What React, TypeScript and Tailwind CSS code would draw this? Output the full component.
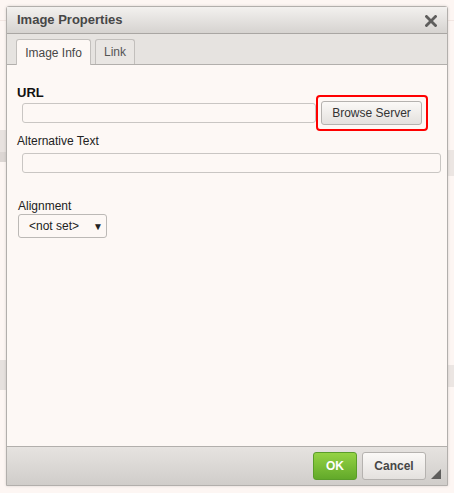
import React from "react";

export default function App() {
  return (
    <div
      className="relative w-[454px] h-[493px] bg-[#fdf6f3] overflow-hidden"
      style={{ fontFamily: '"Liberation Sans", Arial, sans-serif' }}
    >
      {/* faint background page */}
      <div className="absolute left-0 top-[20px] w-[454px] h-px bg-[#f2e6e2]" />
      <div className="absolute left-0 top-[130px] w-[6px] h-[22px] bg-[#e8e2df]" />
      <div className="absolute left-0 top-[152px] w-[6px] h-[10px] bg-[#dcd6d3]" />
      <div className="absolute left-0 top-[360px] w-[6px] h-[30px] bg-[#e6e1de]" />
      <div className="absolute left-[447px] top-[150px] w-[7px] h-[26px] bg-[#ece6e3]" />
      <div className="absolute left-[447px] top-[365px] w-[7px] h-[22px] bg-[#ece6e3]" />

      {/* dialog */}
      <div className="absolute left-[6px] top-[6px] w-[442px] h-[480px] border border-[#b2afac] rounded-t-[3px] flex flex-col bg-[#fdf8f5] shadow-[0_0_3px_rgba(0,0,0,0.15)]">
        {/* title bar */}
        <div className="h-[27px] flex items-center justify-between px-[10px] bg-gradient-to-b from-[#f3f1ef] to-[#d6d3d0] border-b border-[#a9a6a3]">
          <span className="text-[13px] font-bold text-[#474747]">Image Properties</span>
          <svg width="12" height="12" viewBox="0 0 12 12" className="mt-[2px]">
            <path d="M1.5 1.5 L10.5 10.5 M10.5 1.5 L1.5 10.5" stroke="#5f5e5d" strokeWidth="2.8" strokeLinecap="square" />
          </svg>
        </div>
        {/* tabs */}
        <div className="h-[31px] bg-[#e6e3e0] border-b border-[#b2afac] flex items-end px-[9px] gap-[4px]">
          <div className="w-[75px] border border-b-0 border-[#c2bfbc] rounded-t-[3px] bg-[#fdf8f5] flex items-center justify-center text-[12px] text-[#474747] -mb-px h-[26px]">
            Image Info
          </div>
          <div className="h-[25px] w-[40px] border border-b-0 border-[#c2bfbc] rounded-t-[3px] bg-[#e9e6e3] flex items-center justify-center text-[12px] text-[#555]">
            Link
          </div>
        </div>
        {/* body */}
        <div className="flex-1 relative px-[10px]">
          <div className="pt-[20px] text-[13px] font-bold text-[#111] leading-[15px]">URL</div>
          <div className="flex items-center mt-[1px]">
            <div className="ml-[5px] w-[294px] h-[20px] border border-[#c9c6c3] rounded-[3px] bg-[#fdf8f5]" />
            <div className="relative ml-[5px]">
              <div className="absolute -left-[5px] -top-[6px] w-[112px] h-[36px] border-2 border-[#ff0000] rounded-[4px]" />
              <div className="w-[101px] h-[24px] border border-[#b5b2af] rounded-[3px] bg-gradient-to-b from-[#fbf9f7] to-[#e4e1de] flex items-center justify-center text-[12px] text-[#333]">
                Browse Server
              </div>
            </div>
          </div>
          <div className="mt-[9px] text-[12px] text-[#222] leading-[14px]">Alternative Text</div>
          <div className="ml-[5px] mt-[5px] w-[419px] h-[20px] border border-[#c9c6c3] rounded-[3px] bg-[#fdf8f5]" />
          <div className="mt-[26px] ml-[1px] text-[12px] text-[#222] leading-[14px]">Alignment</div>
          <div className="mt-[1px] ml-[1px] w-[89px] h-[24px] border border-[#bcb9b6] rounded-[3px] bg-[#fdf8f5] flex items-center justify-between pl-[10px] pr-[3px] text-[12px] text-[#222]">
            <span>&lt;not set&gt;</span>
            <span className="text-[10px]">▼</span>
          </div>
        </div>
        {/* footer */}
        <div className="h-[39px] bg-gradient-to-b from-[#e6e3e0] to-[#d0cdca] border-t border-[#b2afac] flex items-center justify-end relative">
          <div className="w-[44px] h-[28px] rounded-[3px] border border-[#5a9d2a] bg-gradient-to-b from-[#94d344] to-[#62a92a] flex items-center justify-center text-[12px] font-bold text-white mr-[5px]">
            OK
          </div>
          <div className="w-[64px] h-[28px] rounded-[3px] border border-[#b5b2af] bg-gradient-to-b from-[#fbf9f7] to-[#e4e1de] flex items-center justify-center text-[12px] font-bold text-[#474747] mr-[21px]">
            Cancel
          </div>
          <svg width="10" height="10" viewBox="0 0 10 10" className="absolute right-[6px] bottom-[6px]">
            <path d="M10 0 L10 10 L0 10 Z" fill="#5f5e5d" />
          </svg>
        </div>
      </div>
    </div>
  );
}
